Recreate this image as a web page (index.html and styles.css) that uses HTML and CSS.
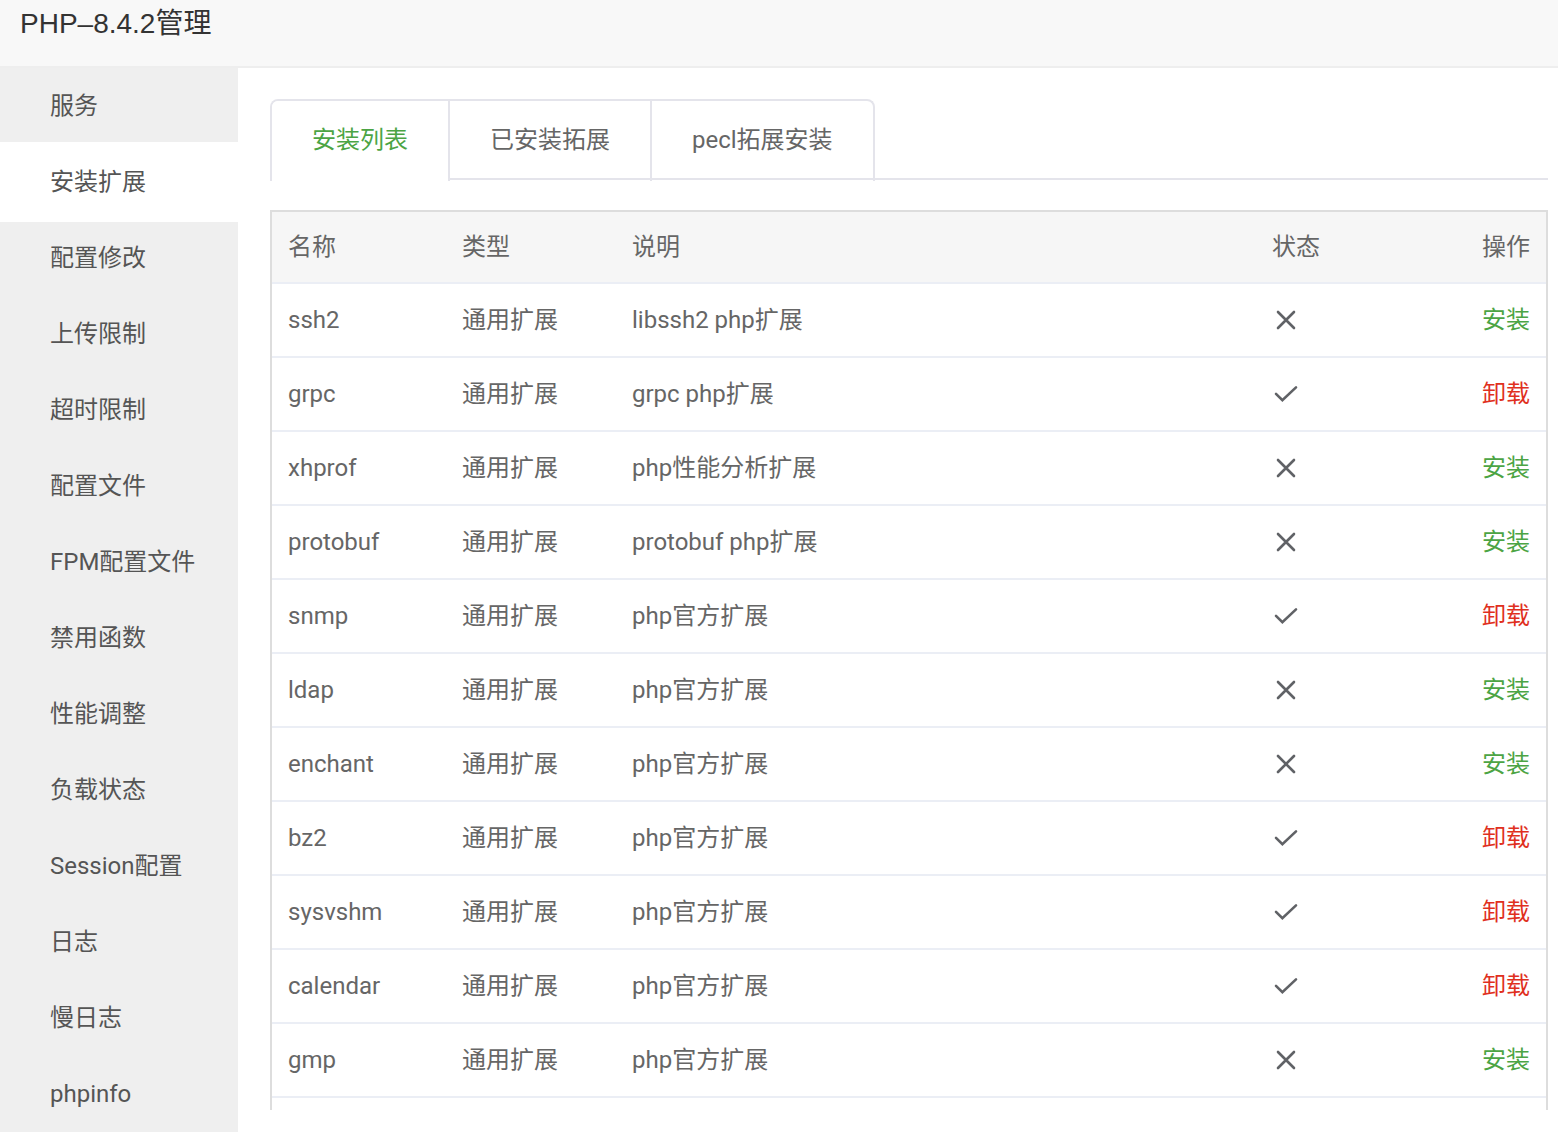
FILE: index.html
```html
<!DOCTYPE html>
<html lang="zh-CN">
<head>
    <meta charset="utf-8">
    <title>PHP-8.4.2管理</title>
    <link rel="stylesheet" href="styles.css">
</head>
<body>
<svg class="symbols" aria-hidden="true">
    <symbol id="icon-close" viewBox="0 0 28 28">
        <path d="M6 6L22 22M22 6L6 22"/>
    </symbol>
    <symbol id="icon-check" viewBox="0 0 28 28">
        <path d="M4 13.8L10.4 20.2L24 7.4"/>
    </symbol>
</svg>
<header class="title-bar">
    <h1>PHP–8.4.2管理</h1>
</header>
<div class="layout">
    <nav class="sidebar">
        <a href="#">服务</a>
        <a href="#" class="active">安装扩展</a>
        <a href="#">配置修改</a>
        <a href="#">上传限制</a>
        <a href="#">超时限制</a>
        <a href="#">配置文件</a>
        <a href="#">FPM配置文件</a>
        <a href="#">禁用函数</a>
        <a href="#">性能调整</a>
        <a href="#">负载状态</a>
        <a href="#">Session配置</a>
        <a href="#">日志</a>
        <a href="#">慢日志</a>
        <a href="#">phpinfo</a>
    </nav>
    <main class="content">
        <div class="tabs">
            <div class="tabs-nav">
                <button type="button" class="tab active">安装列表</button>
                <button type="button" class="tab">已安装拓展</button>
                <button type="button" class="tab">pecl拓展安装</button>
            </div>
        </div>
        <div class="table-wrap">
            <table>
                <colgroup>
                    <col class="col-name">
                    <col class="col-type">
                    <col>
                    <col class="col-status">
                    <col class="col-action">
                </colgroup>
                <thead>
                    <tr><th>名称</th><th>类型</th><th>说明</th><th>状态</th><th>操作</th></tr>
                </thead>
                <tbody>
                    <tr>
                        <td>ssh2</td><td>通用扩展</td><td>libssh2 php扩展</td>
                        <td><svg class="icon"><use href="#icon-close"/></svg></td>
                        <td><a href="#" class="install">安装</a></td>
                    </tr>
                    <tr>
                        <td>grpc</td><td>通用扩展</td><td>grpc php扩展</td>
                        <td><svg class="icon"><use href="#icon-check"/></svg></td>
                        <td><a href="#" class="uninstall">卸载</a></td>
                    </tr>
                    <tr>
                        <td>xhprof</td><td>通用扩展</td><td>php性能分析扩展</td>
                        <td><svg class="icon"><use href="#icon-close"/></svg></td>
                        <td><a href="#" class="install">安装</a></td>
                    </tr>
                    <tr>
                        <td>protobuf</td><td>通用扩展</td><td>protobuf php扩展</td>
                        <td><svg class="icon"><use href="#icon-close"/></svg></td>
                        <td><a href="#" class="install">安装</a></td>
                    </tr>
                    <tr>
                        <td>snmp</td><td>通用扩展</td><td>php官方扩展</td>
                        <td><svg class="icon"><use href="#icon-check"/></svg></td>
                        <td><a href="#" class="uninstall">卸载</a></td>
                    </tr>
                    <tr>
                        <td>ldap</td><td>通用扩展</td><td>php官方扩展</td>
                        <td><svg class="icon"><use href="#icon-close"/></svg></td>
                        <td><a href="#" class="install">安装</a></td>
                    </tr>
                    <tr>
                        <td>enchant</td><td>通用扩展</td><td>php官方扩展</td>
                        <td><svg class="icon"><use href="#icon-close"/></svg></td>
                        <td><a href="#" class="install">安装</a></td>
                    </tr>
                    <tr>
                        <td>bz2</td><td>通用扩展</td><td>php官方扩展</td>
                        <td><svg class="icon"><use href="#icon-check"/></svg></td>
                        <td><a href="#" class="uninstall">卸载</a></td>
                    </tr>
                    <tr>
                        <td>sysvshm</td><td>通用扩展</td><td>php官方扩展</td>
                        <td><svg class="icon"><use href="#icon-check"/></svg></td>
                        <td><a href="#" class="uninstall">卸载</a></td>
                    </tr>
                    <tr>
                        <td>calendar</td><td>通用扩展</td><td>php官方扩展</td>
                        <td><svg class="icon"><use href="#icon-check"/></svg></td>
                        <td><a href="#" class="uninstall">卸载</a></td>
                    </tr>
                    <tr>
                        <td>gmp</td><td>通用扩展</td><td>php官方扩展</td>
                        <td><svg class="icon"><use href="#icon-close"/></svg></td>
                        <td><a href="#" class="install">安装</a></td>
                    </tr>
                    <tr><td></td><td></td><td></td><td></td><td></td></tr>
                </tbody>
            </table>
        </div>
    </main>
</div>
</body>
</html>
```
FILE: styles.css
```css
* {
	box-sizing: border-box;
}

body {
	display: flex;
	flex-direction: column;
	height: 100vh;
	margin: 0;
	background-color: #fff;
	color: #666;
	font-family: Roboto, "Noto Sans CJK SC", sans-serif;
	font-size: 24px;
	line-height: 36px;
}

a {
	text-decoration: none;
}

.symbols {
	display: none;
}

/* title */
.title-bar {
	flex: none;
	padding: 0 20px 18px;
	background-color: #f8f8f8;
	border-bottom: 2px solid #eee;
}

h1 {
	margin: 0;
	color: #333;
	font-family: "Liberation Sans", "Noto Sans CJK SC", sans-serif;
	font-size: 28px;
	font-weight: normal;
	line-height: 48px;
}

.layout {
	display: flex;
	flex: 1;
	min-height: 0;
}

/* left menu */
.sidebar {
	flex: none;
	width: 238px;
	overflow: hidden;
	background-color: #efefef;
}

.sidebar a {
	display: block;
	height: 76px;
	padding-left: 50px;
	color: #555;
	line-height: 76px;
}

.sidebar a.active {
	height: 80px;
	margin: -2px 0;
	background-color: #fff;
	line-height: 80px;
}

.content {
	display: flex;
	flex: 1;
	flex-direction: column;
	min-width: 0;
	padding: 31px 10px 22px 32px;
}

/* tabs */
.tabs {
	flex: none;
	margin-bottom: 30px;
	border-bottom: 2px solid #e4e4eb;
}

.tabs-nav {
	display: inline-flex;
	height: 82px;
	margin-bottom: -3px;
	vertical-align: top;
	border: 2px solid #e4e4eb;
	border-bottom: none;
	border-radius: 8px 8px 0 0;
}

.tab {
	padding: 0 40px 2px;
	border: none;
	border-left: 2px solid #e4e4eb;
	background: none;
	color: #666;
	font: inherit;
	cursor: pointer;
}

.tab.active {
	border-left: none;
	border-radius: 6px 0 0 0;
	background-color: #fff;
	color: #4ca444;
}

/* extension list */
.table-wrap {
	flex: 1;
	min-height: 0;
	overflow: hidden;
}

table {
	width: 100%;
	table-layout: fixed;
	border: 2px solid #ddd;
	border-collapse: separate;
	border-spacing: 0;
}

.col-name {
	width: 174px;
}

.col-type {
	width: 170px;
}

.col-status {
	width: 190px;
}

.col-action {
	width: 100px;
}

th,
td {
	height: 74px;
	padding: 0 16px;
	border-bottom: 2px solid #ebeef5;
	text-align: left;
	font-weight: normal;
}

th {
	height: 72px;
	background-color: #f6f6f6;
}

th:last-child,
td:last-child {
	text-align: right;
}

.icon {
	display: block;
	width: 28px;
	height: 28px;
	fill: none;
	stroke: #606266;
	stroke-width: 2.6;
	stroke-linecap: round;
}

.install {
	color: #4ca444;
}

.uninstall {
	color: #e0301e;
}
```
